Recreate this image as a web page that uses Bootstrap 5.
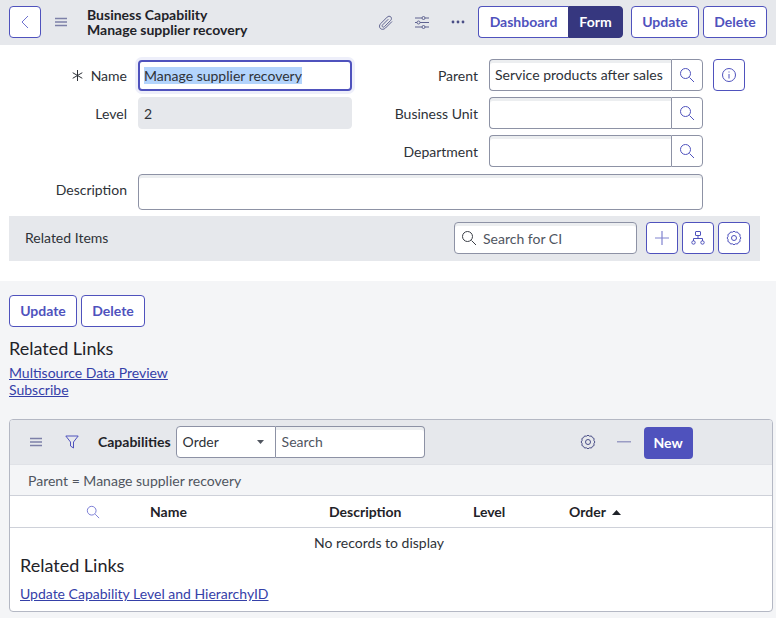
<!DOCTYPE html>
<html lang="en">
<head>
    <meta charset="UTF-8">
    <title>Business Capability - Manage supplier recovery</title>
    <meta name="viewport" content="width=device-width, initial-scale=1">
    <link href="https://cdn.jsdelivr.net/npm/bootstrap@5.3.3/dist/css/bootstrap.min.css" rel="stylesheet">
    <style>
        html, body { height: 100%; }
        body { font-family: Lato, "Liberation Sans", sans-serif; font-size: 14px; color: #1f2329; background: #f4f5f7; overflow: hidden; }
        .btn-now { height: 32px; padding: 0; border: 1px solid #4f52bd; border-radius: 4px; background: #fff; color: #4f52bd; font-size: 14px; font-weight: 700; line-height: 28px; flex: none; }
        .w-upd { width: 68px; }
        .w-del { width: 64px; }
        .btn-sq { width: 32px; height: 32px; padding: 0; border: 1px solid #4f52bd; border-radius: 4px; background: #fff; color: #4f52bd; display: flex; align-items: center; justify-content: center; flex: none; }
        .top-bar { height: 45px; background: #e6e8ec; padding: 6px 9px 7px; }
        .burger { width: 12px; margin-left: 14px; }
        .top-title { font-size: 14px; font-weight: 700; line-height: 15px; margin: 0 0 0 20px; }
        .plain-ico { color: #5f6390; display: flex; align-items: center; justify-content: center; flex: none; }
        .ico-clip { width: 16px; margin-right: 21px; }
        .ico-tune { width: 14px; margin-right: 22px; }
        .ico-more { width: 14px; margin-right: 13px; }
        .seg-a { width: 90px; border-radius: 4px 0 0 4px; border-right: 0; }
        .seg-b { width: 55px; border-radius: 0 4px 4px 0; background: #36377f; border-color: #36377f; color: #fff; margin-right: 8px; }
        .gap-4px { gap: 4px; }
        .form-area { height: 236px; background: #fff; padding-top: 14px; }
        .form-grid { display: grid; grid-template-columns: 127px 225px 126px 225px 42px; row-gap: 6px; }
        .f-label { display: flex; align-items: center; justify-content: flex-end; height: 32px; color: #2e3238; white-space: nowrap; }
        .f-ctrl { margin-left: 11px; }
        .info-cell { margin-left: 10px; }
        .fld { height: 32px; width: 100%; border: 1px solid #8d92a5; border-radius: 4px; background: #fff; box-shadow: inset 0 3px 0 #eceef0; padding: 0 5px; line-height: 30px; color: #2e3238; white-space: nowrap; overflow: hidden; }
        .fld-focus { height: 31px; margin: 0; border: 2px solid #4f52bd; line-height: 27px; box-shadow: 0 0 0 3px #eeeffa; padding: 0 4px; overflow: visible; position: relative; top: 1px; }
        .fld-focus span { background: #b3d4fc; }
        .fld-off { background: #e6e8ec; border-color: #e6e8ec; box-shadow: none; line-height: 32px; }
        .look { display: flex; width: 214px; }
        .look .fld { flex: 1; width: auto; border-radius: 4px 0 0 4px; border-right: 0; }
        .look-btn { width: 32px; height: 32px; border: 1px solid #8d92a5; border-radius: 0 4px 4px 0; background: #fff; color: #4f52bd; display: flex; align-items: center; justify-content: center; flex: none; }
        .desc-row { display: flex; align-items: center; margin-top: 7px; }
        .desc-label { width: 127px; height: 36px; padding-bottom: 6px; }
        .desc-row .fld { width: 565px; height: 36px; margin-left: 11px; }
        .rel-bar { width: 751px; height: 45px; margin: 6px 0 0 9px; background: #e6e8ec; padding: 6px 10px 0 16px; }
        .rel-title { line-height: 32px; color: #2e3238; }
        .ci-box { width: 183px; height: 32px; border: 1px solid #8d92a5; border-radius: 4px; background: #fff; box-shadow: inset 0 3px 0 #eceef0; padding-left: 6px; color: #50555f; gap: 6px; margin-right: 5px; }
        .lower { padding: 14px 0 0 9px; }
        .rl-head { font-size: 18px; line-height: 22px; margin: 10px 0 5px; color: #1f2329; font-weight: 400; }
        .rl-links a { display: block; color: #3540a8; line-height: 17px; width: fit-content; }
        .panel-box { width: 764px; height: 193px; margin-top: 21px; border: 1px solid #b4b8c4; border-radius: 4px; background: #fff; overflow: hidden; }
        .panel-head { height: 45px; background: #e6e8ec; padding: 6px 0 0 20px; border-bottom: 1px solid #e0e2e7; }
        .ph-ico { height: 32px; }
        .ph-burger { width: 12px; }
        .ph-filter { width: 14px; margin-left: 23px; }
        .ph-title { line-height: 32px; margin-left: 19px; }
        .ph-gear { width: 16px; margin-left: 155px; color: #4a4e86; }
        .ph-dash { width: 14px; margin-left: 21px; }
        .panel-filter { height: 31px; background: #f4f5f7; border-bottom: 1px solid #ced1d9; padding-left: 18px; line-height: 31px; color: #50555f; }
        .col-row { display: grid; grid-template-columns: 140px 179px 144px 96px 1fr; height: 32px; border-bottom: 1px solid #ced1d9; font-weight: 700; line-height: 31px; }
        .col-find { padding-left: 76px; display: flex; align-items: center; }
        .sel-box { width: 100px; height: 32px; margin-left: 5px; border: 1px solid #8d92a5; border-radius: 4px 0 0 4px; background: #fff; padding: 0 11px 0 6px; line-height: 30px; color: #2e3238; }
        .srch-box { width: 149px; height: 32px; border: 1px solid #8d92a5; border-left: 0; border-radius: 0 4px 4px 0; background: #fff; padding: 0 6px; line-height: 30px; color: #50555f; box-shadow: inset 0 3px 0 #eceef0; }
        .new-btn { width: 49px; height: 32px; margin: 1px 0 0 13px; border: 0; border-radius: 4px; background: #4f52bd; color: #fff; font-weight: 700; padding: 0 0 1px; }
        .no-rec { line-height: 30px; color: #2e3238; padding-right: 24px; }
        .panel-rl { margin: 0 0 0 10px; line-height: 14px; height: 14px; }
        .panel-link { margin: 13px 0 0 10px; }
        .sort-mark { margin-left: 6px; vertical-align: 2px; }
    </style>
</head>
<body>

<!-- Header -->
<div class="top-bar d-flex align-items-center">
    <button class="btn-sq" aria-label="Back">
        <svg width="14" height="16" viewBox="0 0 14 16" fill="none" stroke="#6f72cf" stroke-width="1"><path d="M10 2 4 8l6 6"/></svg>
    </button>
    <span class="plain-ico burger">
        <svg width="12" height="10" viewBox="0 0 12 10" stroke="#7d80a8" stroke-width="1.4"><path d="M0 1.500h12M0 5h12M0 8.500h12"/></svg>
    </span>
    <div class="top-title">Business Capability<br>Manage supplier recovery</div>
    <div class="ms-auto d-flex align-items-center">
        <span class="plain-ico ico-clip">
            <svg width="16" height="17" viewBox="0 0 16 17" fill="none" stroke="currentColor" stroke-width="1"><path d="M14 7.500 7.500 14c-1.700 1.700-4 1.700-5.200.4-1.200-1.200-1.100-3.300.4-4.800l6.500-6.500c1.100-1.100 2.700-1.100 3.600-.2.900.9.900 2.500-.2 3.600L6.400 12.700c-.6.600-1.400.6-1.900.1-.5-.5-.5-1.300.1-1.900l5.700-5.700"/></svg>
        </span>
        <span class="plain-ico ico-tune">
            <svg width="14" height="13" viewBox="0 0 14 13" fill="none" stroke="currentColor" stroke-width="1"><path d="M0 2h7M10 2h4M0 6.500h2M5 6.500h9M0 11h7M10 11h4"/><circle cx="8.500" cy="2" r="1.500"/><circle cx="3.500" cy="6.500" r="1.500"/><circle cx="8.500" cy="11" r="1.500"/></svg>
        </span>
        <span class="plain-ico ico-more">
            <svg width="14" height="4" viewBox="0 0 14 4" fill="#4a4e86"><circle cx="2" cy="2" r="1.400"/><circle cx="7" cy="2" r="1.400"/><circle cx="12" cy="2" r="1.400"/></svg>
        </span>
        <button class="btn-now seg-a">Dashboard</button>
        <button class="btn-now seg-b">Form</button>
        <div class="d-flex gap-4px">
            <button class="btn-now w-upd">Update</button>
            <button class="btn-now w-del">Delete</button>
        </div>
    </div>
</div>

<!-- Form -->
<div class="form-area">
    <div class="form-grid">
        <div class="f-label">
            <svg class="me-2" width="11" height="11" viewBox="0 0 11 11" stroke="#2e3238" stroke-width="1"><path d="M5.500 0v11M.7 2.700l9.600 5.600M.7 8.300l9.600-5.600"/></svg>
            Name
        </div>
        <div class="f-ctrl"><div class="fld fld-focus"><span>Manage supplier recovery</span></div></div>
        <div class="f-label">Parent</div>
        <div class="f-ctrl look">
            <div class="fld">Service products after sales</div>
            <div class="look-btn"><svg width="16" height="16" viewBox="0 0 16 16" fill="none" stroke="currentColor"><circle cx="6.500" cy="6.500" r="5"/><path d="m10.500 10.500 4.500 4.500"/></svg></div>
        </div>
        <div class="info-cell"><button class="btn-sq" aria-label="Info">
            <svg width="16" height="16" viewBox="0 0 16 16" fill="none" stroke="currentColor"><circle cx="8" cy="8" r="6.500"/><path d="M8 7v4.500M8 4.500v1"/></svg>
        </button></div>

        <div class="f-label">Level</div>
        <div class="f-ctrl"><div class="fld fld-off">2</div></div>
        <div class="f-label">Business Unit</div>
        <div class="f-ctrl look">
            <div class="fld"></div>
            <div class="look-btn"><svg width="16" height="16" viewBox="0 0 16 16" fill="none" stroke="currentColor"><circle cx="6.500" cy="6.500" r="5"/><path d="m10.500 10.500 4.500 4.500"/></svg></div>
        </div>
        <div></div>

        <div></div>
        <div></div>
        <div class="f-label">Department</div>
        <div class="f-ctrl look">
            <div class="fld"></div>
            <div class="look-btn"><svg width="16" height="16" viewBox="0 0 16 16" fill="none" stroke="currentColor"><circle cx="6.500" cy="6.500" r="5"/><path d="m10.500 10.500 4.500 4.500"/></svg></div>
        </div>
        <div></div>
    </div>

    <div class="desc-row">
        <div class="f-label desc-label">Description</div>
        <div class="fld"></div>
    </div>

    <div class="rel-bar d-flex align-items-start">
        <div class="rel-title">Related Items</div>
        <div class="ms-auto d-flex gap-4px">
            <div class="ci-box d-flex align-items-center">
                <svg width="16" height="16" viewBox="0 0 16 16" fill="none" stroke="#3a3e46"><circle cx="6.500" cy="6.500" r="5"/><path d="m10.500 10.500 4.500 4.500"/></svg>
                Search for CI
            </div>
            <button class="btn-sq" aria-label="Add">
                <svg width="14" height="14" viewBox="0 0 14 14" stroke="#8083cf" stroke-width="1.200"><path d="M7 0v14M0 7h14"/></svg>
            </button>
            <button class="btn-sq" aria-label="Map">
                <svg width="14" height="14" viewBox="0 0 14 14" fill="none" stroke="currentColor"><rect x="4.500" y=".5" width="5" height="4" rx=".5"/><path d="M7 4.500V7.500M2.500 10V7.500h9V10"/><circle cx="2.500" cy="11.500" r="1.700"/><circle cx="11.500" cy="11.500" r="1.700"/></svg>
            </button>
            <button class="btn-sq" aria-label="Settings">
                <svg width="16" height="16" viewBox="0 0 16 16" fill="none" stroke="currentColor"><path d="M8 1.200l1.600 1 1.900-.2.900 1.600 1.700.9-.2 1.900 1 1.600-1 1.600.2 1.900-1.700.9-.9 1.600-1.900-.2-1.600 1-1.600-1-1.900.2-.9-1.600-1.700-.9.2-1.900-1-1.600 1-1.600-.2-1.900 1.700-.9.9-1.600 1.900.2z"/><circle cx="8" cy="8" r="2.500"/></svg>
            </button>
        </div>
    </div>
</div>

<!-- Lower part -->
<div class="lower">
    <div class="d-flex gap-4px">
        <button class="btn-now w-upd">Update</button>
        <button class="btn-now w-del">Delete</button>
    </div>
    <h5 class="rl-head">Related Links</h5>
    <div class="rl-links">
        <a href="#">Multisource Data Preview</a>
        <a href="#">Subscribe</a>
    </div>

    <div class="panel-box">
        <div class="panel-head d-flex align-items-start">
            <span class="plain-ico ph-ico ph-burger">
                <svg width="12" height="10" viewBox="0 0 12 10" stroke="#7d80a8" stroke-width="1.400"><path d="M0 1.500h12M0 5h12M0 8.500h12"/></svg>
            </span>
            <span class="plain-ico ph-ico ph-filter">
                <svg width="14" height="14" viewBox="0 0 14 14" fill="none" stroke="#4f52bd"><path d="M.8 1h12.400L8.500 7v6l-3-2V7z"/></svg>
            </span>
            <b class="ph-title">Capabilities</b>
            <div class="sel-box d-flex justify-content-between align-items-center">
                Order
                <svg width="7" height="4" viewBox="0 0 7 4" fill="#50555f"><path d="M0 0h7L3.500 4z"/></svg>
            </div>
            <div class="srch-box">Search</div>
            <span class="plain-ico ph-ico ph-gear">
                <svg width="16" height="16" viewBox="0 0 16 16" fill="none" stroke="currentColor"><path d="M8 1.200l1.600 1 1.900-.2.900 1.600 1.700.9-.2 1.900 1 1.600-1 1.600.2 1.900-1.700.9-.9 1.600-1.900-.2-1.600 1-1.600-1-1.900.2-.9-1.600-1.700-.9.2-1.900-1-1.600 1-1.600-.2-1.900 1.700-.9.9-1.600 1.900.2z"/><circle cx="8" cy="8" r="2.500"/></svg>
            </span>
            <span class="plain-ico ph-ico ph-dash">
                <svg width="14" height="2" viewBox="0 0 14 2"><rect width="14" height="1.500" fill="#9a9cc4"/></svg>
            </span>
            <button class="new-btn">New</button>
        </div>
        <div class="panel-filter">Parent = Manage supplier recovery</div>
        <div class="col-row">
            <div class="col-find"><svg width="14" height="14" viewBox="0 0 16 16" fill="none" stroke="#6c6fd0"><circle cx="6.500" cy="6.500" r="5"/><path d="m10.500 10.500 4.500 4.500"/></svg></div>
            <div>Name</div>
            <div>Description</div>
            <div>Level</div>
            <div>Order<svg class="sort-mark" width="9" height="5" viewBox="0 0 9 5" fill="#1f2329"><path d="M4.500 0 9 5H0z"/></svg></div>
        </div>
        <div class="text-center no-rec">No records to display</div>
        <h5 class="rl-head panel-rl">Related Links</h5>
        <div class="rl-links panel-link"><a href="#">Update Capability Level and HierarchyID</a></div>
    </div>
</div>

<script src="https://cdn.jsdelivr.net/npm/bootstrap@5.3.3/dist/js/bootstrap.bundle.min.js"></script>
</body>
</html>
